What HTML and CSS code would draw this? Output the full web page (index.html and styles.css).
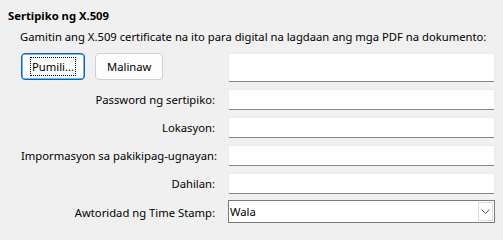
FILE: index.html
```html
<!DOCTYPE html>
<html>
<head>
<meta charset="utf-8">
<link rel="stylesheet" href="styles.css">
</head>
<body>
<div class="page">
  <div class="title">Sertipiko ng X.509</div>
  <div class="desc">Gamitin ang X.509 certificate na ito para digital na lagdaan ang mga PDF na dokumento:</div>
  <div class="form">
    <div class="buttons">
      <button class="btn btn-focus"><span class="focus">Pumili...</span></button>
      <button class="btn">Malinaw</button>
    </div>
    <div class="input tall"></div>

    <div class="label">Password ng sertipiko:</div>
    <div class="input"></div>

    <div class="label">Lokasyon:</div>
    <div class="input"></div>

    <div class="label">Impormasyon sa pakikipag-ugnayan:</div>
    <div class="input"></div>

    <div class="label">Dahilan:</div>
    <div class="input"></div>

    <div class="label">Awtoridad ng Time Stamp:</div>
    <div class="combo">
      <span class="combo-text">Wala</span>
      <span class="combo-btn">
        <svg width="9" height="5" viewBox="0 0 9 5"><path d="M0.5 0.5 L4.5 4.5 L8.5 0.5" fill="none" stroke="#555" stroke-width="1"/></svg>
      </span>
    </div>
  </div>
</div>
</body>
</html>
```
FILE: styles.css
```css
html, body {
  margin: 0;
  padding: 0;
  background: #f0f0f0;
}
body {
  font-family: "Noto Sans", "Liberation Sans", sans-serif;
  font-size: 11.25px;
  color: #000;
}
.page {
  padding: 8px 8px 0 8px;
}
.title {
  font-weight: bold;
  line-height: 16px;
}
.desc {
  margin-top: 5px;
  margin-left: 12px;
  line-height: 16px;
  white-space: nowrap;
}
.form {
  margin-top: 8px;
  margin-left: 13px;
  display: grid;
  grid-template-columns: 194px 267px;
  column-gap: 13px;
  row-gap: 7px;
  align-items: center;
}
.buttons {
  display: flex;
  gap: 10px;
  align-self: start;
}
.btn {
  font-family: inherit;
  font-size: inherit;
  height: 27px;
  padding: 0 11px;
  background: #fdfdfd;
  border: 1px solid #d0d0d0;
  border-radius: 4px;
  color: #000;
  display: flex;
  align-items: center;
  justify-content: center;
}
.btn-focus {
  width: 64px;
  border: 1px solid #0067c0;
  box-shadow: inset 0 0 0 0.5px #0067c0;
  padding: 0 6px;
}
.focus {
  outline: 1px dotted #000;
  padding: 1px 1px;
  line-height: 15px;
}
.label {
  text-align: right;
  white-space: nowrap;
}
.input {
  height: 21px;
  box-sizing: border-box;
  background: #fff;
  border: 1px solid #ebebeb;
  border-bottom: 1px solid #868686;
  border-radius: 2px;
}
.input.tall {
  height: 29px;
}
.combo {
  height: 23px;
  box-sizing: border-box;
  background: #fff;
  border: 1px solid #7a7a7a;
  display: flex;
  align-items: center;
  margin-top: -1px;
}
.combo-text {
  flex: 1;
  padding-left: 1px;
}
.combo-btn {
  width: 15px;
  height: 19px;
  margin-right: 1px;
  border: 1px solid #dcdcdc;
  box-sizing: border-box;
  display: flex;
  align-items: center;
  justify-content: center;
  background: #fff;
}
```
